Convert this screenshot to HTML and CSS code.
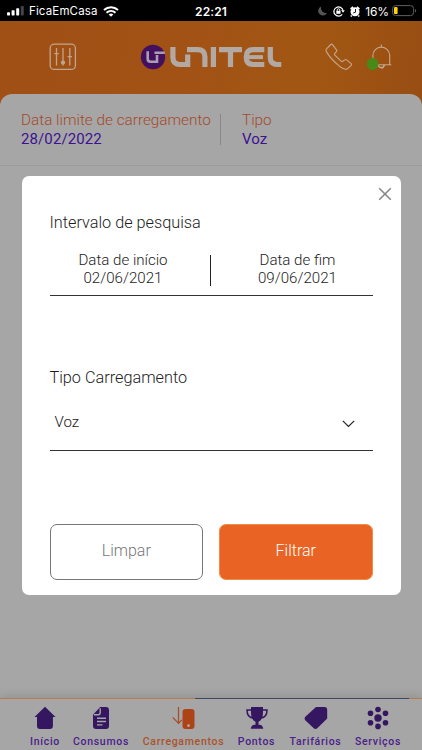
FILE: index.html
```html
<!DOCTYPE html>
<html lang="pt">
<head>
    <meta charset="UTF-8">
    <meta name="viewport" content="width=device-width, initial-scale=1.0">
    <title>Carregamentos</title>
    <link rel="stylesheet" href="styles.css">
</head>
<body>
    <div class="status-bar">
        <div class="carrier">
            <svg width="18" height="10" viewBox="0 0 18 10" fill="#fff">
                <rect x="0" y="6.2" width="3" height="3.3" rx=".7"/>
                <rect x="4.6" y="4.2" width="3" height="5.3" rx=".7"/>
                <rect x="9.2" y="2.2" width="3" height="7.3" rx=".7"/>
                <rect x="13.8" y="0" width="3" height="9.5" rx=".7" fill="#444"/>
            </svg>
            <span class="carrier-name">FicaEmCasa</span>
            <svg width="16" height="11" viewBox="0 0 16 11" fill="none" stroke="#fff" stroke-width="2">
                <path d="M1 4C5 .2 11 .2 15 4M3.5 6.7c2.6-2.3 6.4-2.3 9 0"/>
                <path d="M5.7 8.4c1.4-1.1 3.2-1.1 4.6 0L8 10.7z" fill="#fff" stroke="none"/>
            </svg>
        </div>
        <div class="clock">22:21</div>
        <div class="indicators">
            <svg width="10" height="10" viewBox="0 0 10 10"><path d="M3.2.5a5 5 0 0 0 6 6.3A4.7 4.7 0 1 1 3.2.5z" fill="#555"/></svg>
            <svg class="lock" width="12" height="11" viewBox="0 0 12 11" fill="none" stroke="#fff">
                <path d="M9.2 8.3A4.6 4.6 0 1 1 10 4.5" stroke-width="1.2"/>
                <path d="M8.2 4.2h3.6L10 6.8z" fill="#fff" stroke="none"/>
                <path d="M4.2 5V4a1.3 1.3 0 0 1 2.6 0v1" stroke-width=".9"/>
                <rect x="3.3" y="4.8" width="4.2" height="3" fill="#fff" stroke="none"/>
            </svg>
            <svg class="alarm" width="10" height="11" viewBox="0 0 10 11">
                <circle cx="5" cy="5.8" r="4.5" fill="#fff"/>
                <path d="M.5 3L3 .9M9.5 3L7 .9M1.7 9.4L.8 10.5M8.3 9.4l.9 1.1" stroke="#fff" stroke-width="1.6"/>
                <path d="M5.5 3v3.2L3.2 7" fill="none" stroke="#000" stroke-width=".9"/>
            </svg>
            <span class="battery-level">16%</span>
            <svg width="25" height="12" viewBox="0 0 25 12">
                <rect x=".6" y=".6" width="21" height="10" rx="3" fill="none" stroke="#5d5d5d"/>
                <rect x="2" y="2.1" width="3.6" height="7" rx="1.2" fill="#fed30b"/>
                <path d="M23 4v3.4q1.2-.5 1.2-1.7T23 4z" fill="#5d5d5d"/>
            </svg>
        </div>
    </div>

    <header class="header">
        <svg class="filter-icon" width="28" height="28" viewBox="0 0 28 28" fill="none" stroke="#bfa58e" stroke-width="1.3">
            <rect x="1.2" y="1.2" width="25.2" height="25.2" rx="4"/>
            <path d="M7.5 5v17.5M14 5v17.5M20.8 5v17.5M5.3 10.7h4.4M18.6 13.6H23"/>
            <circle cx="14" cy="19.6" r="1.5" fill="#bfa58e"/>
        </svg>
        <svg class="logo" width="142" height="26" viewBox="0 0 142 26" fill="none" stroke="#b2a9a4" stroke-width="5.2">
            <circle cx="13" cy="13" r="12.2" fill="#42105f" stroke="none"/>
            <path d="M7.7 7.2v7.500q0 3 3 3h6.300V11M14.500 8.800h10.300" stroke="#aa9fb2" stroke-width="2.600"/>
            <path d="M32.900 3v10.500q0 7 7 7h7.800V10.500M47 5.600h10.500q7.400 0 7.400 7V23M73.400 3v20M79 5.600h23M90.500 5.600V23M124.300 5.600h-11q-7 0-7 7v1q0 6.900 7 6.900h11M130.300 3v10.500q0 7 7 7h4"/>
            <path d="M108 13.100h15" stroke-width="4"/>
        </svg>
        <svg class="phone" width="28" height="28" viewBox="0 0 28 28" fill="none" stroke="#c5a78b" stroke-width="1.1" stroke-linejoin="round">
            <path d="M1.5 5.8L5.8 1.5q1-.8 1.700.2l4 5.200q.7 1-.3 2L9.700 10.600q-.6.800.1 1.600l6.300 6q.9.800 1.700.1l1.900-1.400q1-.8 2 0l4.400 3.700q1 .9.1 1.800l-3.200 3q-1.400 1.400-3.400.7-2.500-.8-5.200-2.900Q5.800 16 1.800 9.400.3 6.800 1.500 5.800z"/>
        </svg>
        <svg class="bell" width="27" height="27" viewBox="0 0 27 27" fill="none" stroke="#c5a78b" stroke-width="1.1">
            <path d="M15.3.5v3M6.900 20.800v-9.300a8.400 8.400 0 0 1 16.800 0v9.300h1.600H5M12 21a3.400 3.400 0 0 0 6.600 0M15.600 24.500q2.200-.4 2.200-3.200"/>
            <circle cx="6.600" cy="20" r="5.900" fill="#478a17" stroke="none"/>
        </svg>
    </header>

    <main class="sheet">
        <div class="summary">
            <div class="summary-item summary-date">
                <div class="label">Data limite de carregamento</div>
                <div class="value">28/02/2022</div>
            </div>
            <div class="summary-item">
                <div class="label">Tipo</div>
                <div class="value">Voz</div>
            </div>
        </div>
    </main>

    <nav class="tabs">
        <div class="tab tab-home">
            <svg width="24" height="24" viewBox="0 0 24 24" fill="#351660"><path d="M12 .8L22.500 11h-2.600v9q0 3-3 3H7q-3 0-3-3v-9H1.500z"/></svg>
            <span>Início</span>
        </div>
        <div class="tab tab-usage">
            <svg width="24" height="24" viewBox="0 0 24 24"><path d="M4 8.800L11.200.9h5.600q3.200 0 3.200 3.200V20q0 3-3 3H7q-3 0-3-3z" fill="#351660"/><path d="M5 8.800h4.200q2 0 2-2V2.200M8 12.200h9M8 15.500h9M8 18.900h5.500" fill="none" stroke="#a6a6a6" stroke-width="1.4"/></svg>
            <span>Consumos</span>
        </div>
        <div class="tab tab-topup active">
            <svg width="24" height="24" viewBox="0 0 24 24"><path d="M6.500 1v16M.8 11.300l5.700 6 3.300-3.400" fill="none" stroke="#a64b27" stroke-width="1.2"/><rect x="10.500" y="3" width="12" height="20" rx="3" fill="#ad4417"/><circle cx="16.500" cy="19.600" r="1.300" fill="#c5afa5"/></svg>
            <span>Carregamentos</span>
        </div>
        <div class="tab tab-points">
            <svg width="24" height="24" viewBox="0 0 24 24"><path d="M6 1h12v5.500q0 7.300-4.500 9.200v3h1q3 0 3.800 4.100H5.700q.8-4.100 3.800-4.100h1v-3Q6 13.800 6 6.500z" fill="#351660"/><path d="M6 4H2q0 7.300 6 8M18 4h4q0 7.300-6 8" fill="none" stroke="#351660" stroke-width="1.5"/></svg>
            <span>Pontos</span>
        </div>
        <div class="tab tab-plans">
            <svg width="24" height="24" viewBox="0 0 24 24" fill="#351660"><path d="M12 1h8.500Q23.200 1 23.200 4v8.500L13.500 22q-2 1.800-4 0L1.300 14.200q-1.500-1.700 0-3.500z"/></svg>
            <span>Tarifários</span>
        </div>
        <div class="tab tab-services">
            <svg width="24" height="24" viewBox="0 0 24 24" fill="#351660"><circle cx="12" cy="12" r="3.700"/><circle cx="12" cy="3.500" r="2.800"/><circle cx="12" cy="20.400" r="2.800"/><circle cx="4.500" cy="7.300" r="2.800"/><circle cx="19.500" cy="7.300" r="2.800"/><circle cx="4.500" cy="16.700" r="2.800"/><circle cx="19.500" cy="16.700" r="2.800"/></svg>
            <span>Serviços</span>
        </div>
    </nav>

    <div class="modal">
        <svg class="close" width="14" height="14" viewBox="0 0 14 14" stroke="#888" stroke-width="1.6"><path d="M1.200 1.200l11.600 11.600M12.800 1.200L1.200 12.800"/></svg>
        <h2 class="range-title">Intervalo de pesquisa</h2>
        <div class="range">
            <div class="date">
                <div>Data de início</div>
                <div>02/06/2021</div>
            </div>
            <div class="divider"></div>
            <div class="date date-end">
                <div>Data de fim</div>
                <div>09/06/2021</div>
            </div>
        </div>
        <h2 class="type-title">Tipo Carregamento</h2>
        <div class="select">
            <span>Voz</span>
            <svg width="13" height="8" viewBox="0 0 13 8" fill="none" stroke="#222" stroke-width="1.2"><path d="M.8.900l5.700 5.600L12.200.900"/></svg>
        </div>
        <div class="buttons">
            <button class="btn">Limpar</button>
            <button class="btn btn-primary">Filtrar</button>
        </div>
    </div>
</body>
</html>
```

FILE: styles.css
```css
* {
    box-sizing: border-box;
}
body {
    margin: 0;
    width: 422px;
    height: 750px;
    display: flex;
    flex-direction: column;
    position: relative;
    overflow: hidden;
    background: #a05016;
    font-family: Roboto, sans-serif;
    font-weight: 300;
}
svg {
    display: block;
    flex: none;
}

/* status bar */
.status-bar {
    height: 21px;
    flex: none;
    display: grid;
    grid-template-columns: 1fr auto 1fr;
    align-items: center;
    padding: 1px 7px 0 7px;
    background: #000;
    color: #fff;
    font-family: Inter, sans-serif;
    font-size: 12px;
    font-weight: 400;
}
.carrier,
.indicators {
    display: flex;
    align-items: center;
}
.carrier-name {
    margin: 0 5px 0 4px;
    font-size: 11.5px;
    letter-spacing: 0.15px;
}
.clock {
    font-weight: 600;
    font-size: 12px;
    letter-spacing: 0.1px;
}
.indicators {
    justify-content: flex-end;
}
.indicators svg:last-child {
    margin-right: -2px;
}
.lock {
    margin-left: 5px;
}
.alarm {
    margin-left: 5px;
}
.battery-level {
    margin: 0 3px 0 5px;
    letter-spacing: -0.1px;
}

/* header */
.header {
    height: 85px;
    margin-bottom: -12px;
    flex: none;
    display: flex;
    align-items: flex-start;
    padding: 22px 29px 0 49px;
    background: linear-gradient(100deg, #a05014 0%, #a25215 45%, #a15713 75%, #984d13 100%);
}
.logo {
    margin: 1px 0 0 63px;
}
.phone {
    margin-left: 43px;
}
.bell {
    margin: 1px 0 0 13px;
}

/* page content */
.sheet {
    flex: 1;
    background: #a6a6a6;
    border-radius: 12px 12px 0 0;
}
.summary {
    display: flex;
    height: 72px;
    padding: 17px 21px 0;
    border-bottom: 1px solid #9c9c9c;
    font-size: 15.3px;
    line-height: 18.5px;
}
.summary-item {
    height: 37px;
}
.summary-date {
    width: 200px;
    height: 31px;
    margin: 3px 21px 0 0;
    border-right: 1px solid #898989;
}
.summary-date .label {
    margin-top: -3px;
}
.label {
    color: #a5492b;
    white-space: nowrap;
}
.value {
    color: #3c1291;
    font-size: 15px;
    font-weight: 400;
    letter-spacing: 0.1px;
}

/* bottom navigation */
.tabs {
    height: 52px;
    flex: none;
    display: flex;
    padding-top: 8px;
    background: linear-gradient(90deg, #b57b49 0 195px, #414663 195px 409px, #b57b49 409px) 0 0 / 100% 1px no-repeat #a6a6a6;
    box-shadow: 0 -3px 8px rgba(0, 0, 0, 0.1);
}
.tab {
    display: flex;
    flex-direction: column;
    align-items: center;
    color: #4a2189;
    font-size: 10.5px;
    font-weight: 500;
    line-height: 14px;
    letter-spacing: 0.7px;
    white-space: nowrap;
}
.tab span {
    margin-top: 5px;
}
.tab-home {
    width: 61px;
    padding-left: 29px;
}
.tab-usage {
    width: 56px;
    margin-left: 12px;
}
.tab-topup {
    width: 83px;
    margin-left: 13px;
}
.tab-points {
    width: 37px;
    margin-left: 13px;
}
.tab-plans {
    width: 51px;
    margin-left: 15px;
}
.tab-services {
    width: 46px;
    margin-left: 14px;
}
.active {
    color: #aa522c;
}

/* filter modal */
.modal {
    position: absolute;
    top: 175.5px;
    left: 21.5px;
    width: 379px;
    height: 419.5px;
    padding: 36px 28px 0;
    background: #fff;
    border-radius: 7px;
    color: #1c1c1c;
    font-size: 15.1px;
}
.close {
    position: absolute;
    top: 11px;
    right: 9px;
}
.modal h2 {
    margin: 0;
    font-size: 16.25px;
    font-weight: 300;
    line-height: 22px;
}
.range {
    display: flex;
    align-items: flex-start;
    height: 62px;
    padding-top: 17px;
    border-bottom: 1px solid #333;
    line-height: 18px;
    text-align: center;
}
.date {
    width: 147px;
}
.date-end {
    width: 148px;
    margin-left: 13px;
}
.divider {
    width: 1px;
    height: 31px;
    margin: 4px 0 0 13px;
    background: #222;
}
.type-title {
    padding-top: 71px;
}
.select {
    display: flex;
    justify-content: space-between;
    align-items: center;
    height: 62px;
    padding: 5px 18px 0 5px;
    border-bottom: 1px solid #333;
}
.select svg {
    margin-top: 4px;
}
.buttons {
    display: flex;
    gap: 16px;
    margin-top: 73px;
}
.btn {
    flex: 1;
    height: 56px;
    padding: 0 0 2px;
    border: 1px solid #777;
    border-radius: 7px;
    background: #fff;
    color: #777;
    font-family: inherit;
    font-size: 16px;
    font-weight: 300;
}
.btn-primary {
    border-color: #f18a43;
    background: #e96424;
    color: #fff;
}
```
